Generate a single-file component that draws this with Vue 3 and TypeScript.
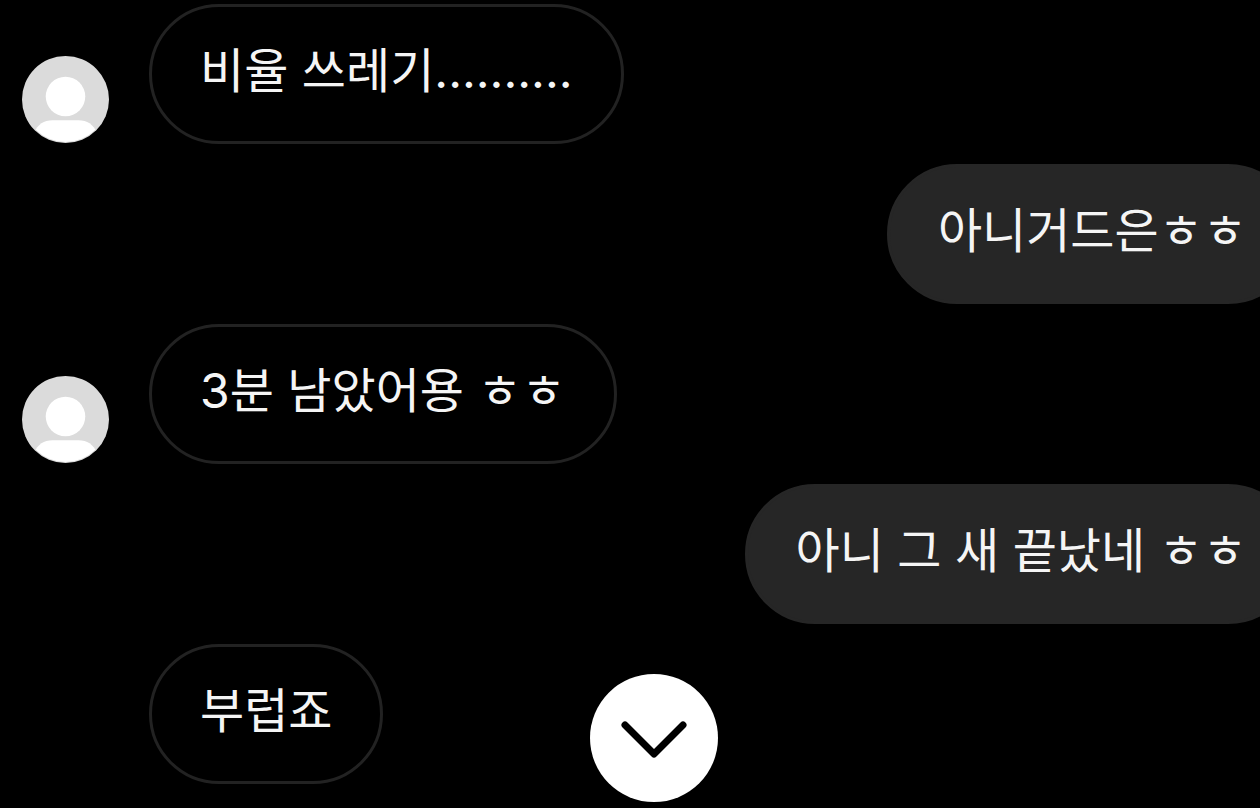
<script setup lang="ts">
interface Message {
  id: number
  text: string
  mine: boolean
  avatar: boolean
}

const messages: Message[] = [
  { id: 1, text: '비율 쓰레기..........', mine: false, avatar: true },
  { id: 2, text: '아니거드은ㅎㅎ', mine: true, avatar: false },
  { id: 3, text: '3분 남았어용 ㅎㅎ', mine: false, avatar: true },
  { id: 4, text: '아니 그 새 끝났네 ㅎㅎ', mine: true, avatar: false },
  { id: 5, text: '부럽죠', mine: false, avatar: false },
]

function scrollToLatest(): void {
  window.scrollTo({ top: document.body.scrollHeight, behavior: 'smooth' })
}
</script>

<template>
  <main class="chat">
    <ol class="messages">
      <li v-for="m in messages" :key="m.id" class="row" :class="{ mine: m.mine }">
        <div v-if="!m.mine" class="avatar-slot">
          <svg v-if="m.avatar" class="avatar" viewBox="0 0 88 88" aria-hidden="true">
            <defs>
              <clipPath :id="`clip-${m.id}`"><circle cx="44" cy="44" r="43" /></clipPath>
            </defs>
            <circle cx="44" cy="44" r="44" fill="#dbdbdb" />
            <g :clip-path="`url(#clip-${m.id})`" fill="#fff">
              <circle cx="44" cy="41" r="20" />
              <path d="M12 88V78C16 69 22 65 31 65H57C66 65 72 69 76 78V88Z" />
            </g>
          </svg>
        </div>
        <p class="bubble">{{ m.text }}</p>
      </li>
    </ol>
    <button class="jump" type="button" aria-label="Scroll to latest" @click="scrollToLatest">
      <svg viewBox="0 0 128 128" aria-hidden="true">
        <path d="M35 51L64 80L93 51" fill="none" stroke="#000" stroke-width="7" stroke-linecap="round" stroke-linejoin="round" />
      </svg>
    </button>
  </main>
</template>

<style>
body {
  background: #000;
  overflow: hidden;
}
</style>

<style scoped>
.chat {
  box-sizing: border-box;
  position: relative;
  min-height: 100vh;
  overflow: hidden;
  background: #000;
  color: #f5f5f5;
  font-family: Inter, "Noto Sans CJK KR", sans-serif;
}

.messages {
  display: flex;
  flex-direction: column;
  gap: 20px;
  margin: 0;
  padding: 4px 0 24px 22px;
  list-style: none;
}

.row {
  display: flex;
  align-items: flex-end;
}

.row.mine {
  justify-content: flex-end;
  margin-right: -38px;
}

.avatar-slot {
  flex: none;
  width: 127px;
}

.avatar {
  display: block;
  width: 87px;
  height: 87px;
  margin-bottom: 1px;
}

.bubble {
  box-sizing: border-box;
  min-height: 140px;
  margin: 0;
  padding: 34px 48px 40px;
  border: 3px solid #222;
  border-radius: 70px;
  font-size: 48px;
  font-weight: 400;
  line-height: 60px;
  white-space: pre;
}

.mine .bubble {
  border-color: #262626;
  background: #262626;
}

.jump {
  position: absolute;
  bottom: 6px;
  left: 50%;
  width: 128px;
  height: 128px;
  margin-left: -40px;
  padding: 0;
  border: 0;
  border-radius: 50%;
  background: #fff;
  cursor: pointer;
}

.jump svg {
  display: block;
  width: 128px;
  height: 128px;
}
</style>
